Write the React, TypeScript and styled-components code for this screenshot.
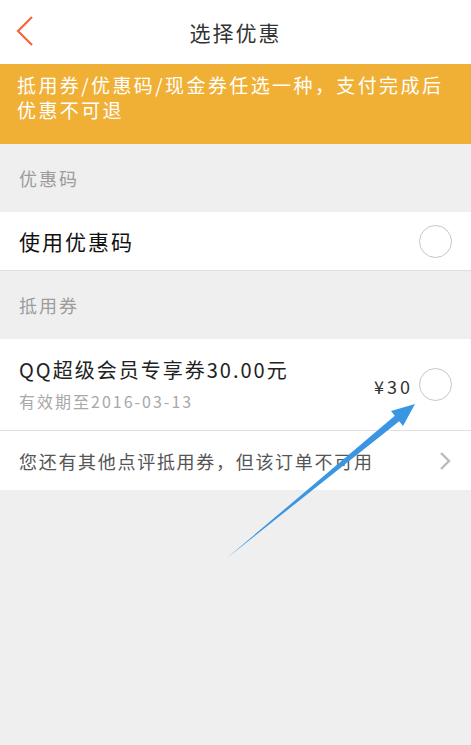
import * as React from "react";
import styled, { createGlobalStyle } from "styled-components";

const GlobalStyle = createGlobalStyle`
  html, body {
    margin: 0;
    padding: 0;
    background: #efefef;
  }
  body {
    font-family: "Noto Sans CJK SC", "Noto Sans", sans-serif;
  }
`;

const Page = styled.div`
  position: relative;
  width: 471px;
  height: 745px;
  overflow: hidden;
  background: #efefef;
`;

const Header = styled.header`
  height: 64px;
  background: #fff;
  display: flex;
  align-items: center;
  justify-content: center;
  position: relative;
`;

const BackButton = styled.div`
  position: absolute;
  left: 14px;
  top: 14px;
  width: 24px;
  height: 34px;
`;

const Title = styled.h1`
  margin: 0;
  font-size: 21px;
  font-weight: 400;
  color: #333;
  letter-spacing: 2px;
`;

const Notice = styled.div`
  height: 80px;
  box-sizing: border-box;
  background: #f0b035;
  color: #fff;
  padding: 8px 17px 0;
  font-size: 19px;
  line-height: 25px;
  letter-spacing: 2.4px;
`;

const SectionLabel = styled.div`
  height: 68px;
  display: flex;
  align-items: center;
  padding-left: 19px;
  font-size: 18px;
  color: #9c9c9c;
  letter-spacing: 2px;
`;

const Card = styled.div`
  background: #fff;
`;

const Row = styled.div<{ height: number; divider?: boolean }>`
  height: ${p => p.height}px;
  box-sizing: border-box;
  display: flex;
  align-items: center;
  padding: 0 19px;
  border-bottom: ${p => (p.divider ? "1px solid #e0e0e0" : "none")};
`;

const RowText = styled.div<{ size: number; color: string; spacing: number }>`
  flex: 1;
  font-size: ${p => p.size}px;
  color: ${p => p.color};
  letter-spacing: ${p => p.spacing}px;
`;

const Radio = styled.div`
  width: 31px;
  height: 31px;
  border: 1.5px solid #c6c6c6;
  border-radius: 50%;
  flex-shrink: 0;
`;

const CouponInfo = styled.div`
  flex: 1;
  display: flex;
  flex-direction: column;
  gap: 6px;
  margin-top: -2px;
`;

const CouponName = styled.div`
  font-size: 20px;
  color: #222;
  letter-spacing: 2px;
  line-height: 28px;
`;

const CouponDate = styled.div`
  font-size: 16px;
  color: #a8a8a8;
  letter-spacing: 2px;
  line-height: 22px;
`;

const Price = styled.div`
  font-size: 18px;
  color: #333;
  letter-spacing: 3px;
  margin-right: 6px;
  margin-top: 2px;
`;

const Overlay = styled.svg`
  position: absolute;
  left: 0;
  top: 0;
  pointer-events: none;
`;

export default function App() {
  return (
    <Page>
      <GlobalStyle />
      <Header>
        <BackButton>
          <svg width="24" height="34" viewBox="0 0 24 34">
            <polyline
              points="18,3 4,17 18,31"
              fill="none"
              stroke="#f5673a"
              strokeWidth="2.2"
            />
          </svg>
        </BackButton>
        <Title>选择优惠</Title>
      </Header>
      <Notice>
        抵用券/优惠码/现金券任选一种，支付完成后
        <br />
        优惠不可退
      </Notice>
      <SectionLabel>优惠码</SectionLabel>
      <Card>
        <Row height={59} divider>
          <RowText size={21} color="#111" spacing={2}>使用优惠码</RowText>
          <Radio />
        </Row>
      </Card>
      <SectionLabel>抵用券</SectionLabel>
      <Card>
        <Row height={92} divider>
          <CouponInfo>
            <CouponName>QQ超级会员专享券30.00元</CouponName>
            <CouponDate>有效期至2016-03-13</CouponDate>
          </CouponInfo>
          <Price>¥30</Price>
          <Radio />
        </Row>
        <Row height={59}>
          <RowText size={18} color="#555" spacing={1.7}>
            您还有其他点评抵用券，但该订单不可用
          </RowText>
          <svg width="14" height="22" viewBox="0 0 14 22">
            <polyline
              points="3,3 11,11 3,19"
              fill="none"
              stroke="#bbb"
              strokeWidth="2.4"
            />
          </svg>
        </Row>
      </Card>
      <Overlay width="471" height="745" viewBox="0 0 471 745">
        <polygon
          points="227,558 394.8,415.8 391,411 415,404 403,426 399.2,421.2"
          fill="#3a96e2"
        />
      </Overlay>
    </Page>
  );
}
